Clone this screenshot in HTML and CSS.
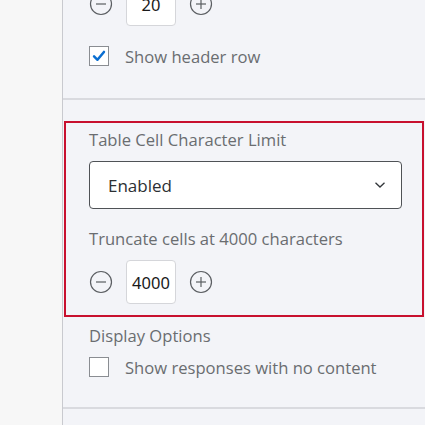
FILE: index.html
```html
<!DOCTYPE html>
<html>
<head>
<meta charset="utf-8">
<link rel="stylesheet" href="styles.css">
</head>
<body>
<div class="layout">
  <div class="side"></div>
  <div class="panel">
    <div class="section first">
      <div class="stepper top">
        <svg class="circ" viewBox="0 0 24 24"><circle cx="12" cy="12" r="10.5"/><line x1="7" y1="12" x2="17" y2="12"/></svg>
        <div class="num">20</div>
        <svg class="circ" viewBox="0 0 24 24"><circle cx="12" cy="12" r="10.5"/><line x1="7" y1="12" x2="17" y2="12"/><line x1="12" y1="7" x2="12" y2="17"/></svg>
      </div>
      <div class="check-row">
        <span class="box checked"><svg viewBox="0 0 20 20"><path d="M4.5 10.5 L8.3 14.2 L15.5 5.5"/></svg></span>
        <span class="check-label">Show header row</span>
      </div>
    </div>
    <div class="divider"></div>
    <div class="highlight">
      <div class="label first-label">Table Cell Character Limit</div>
      <div class="select">
        <span>Enabled</span>
        <svg class="chev" viewBox="0 0 12 8"><path d="M1.5 1.8 L6 6 L10.5 1.8"/></svg>
      </div>
      <div class="label trunc">Truncate cells at 4000 characters</div>
      <div class="stepper">
        <svg class="circ" viewBox="0 0 24 24"><circle cx="12" cy="12" r="10.5"/><line x1="7" y1="12" x2="17" y2="12"/></svg>
        <div class="num">4000</div>
        <svg class="circ" viewBox="0 0 24 24"><circle cx="12" cy="12" r="10.5"/><line x1="7" y1="12" x2="17" y2="12"/><line x1="12" y1="7" x2="12" y2="17"/></svg>
      </div>
    </div>
    <div class="section display">
      <div class="label">Display Options</div>
      <div class="check-row second">
        <span class="box"></span>
        <span class="check-label">Show responses with no content</span>
      </div>
    </div>
    <div class="divider bottom"></div>
  </div>
</div>
</body>
</html>
```
FILE: styles.css
```css
html, body {
  margin: 0;
  padding: 0;
  height: 100%;
  overflow: hidden;
}
body {
  font-family: "Open Sans", "Noto Sans", sans-serif;
  background: #f3f4f8;
}
.layout {
  display: flex;
  height: 425px;
}
.side {
  width: 62px;
  flex: none;
  background: #f7f7f7;
  border-right: 1px solid #c9cacf;
}
.panel {
  flex: 1;
  background: #f3f4f8;
  display: flex;
  flex-direction: column;
}
.section {
  padding-left: 26px;
}
.stepper {
  display: flex;
  align-items: center;
  height: 44px;
}
.stepper.top {
  margin-top: -18px;
}
.circ {
  width: 24px;
  height: 24px;
  flex: none;
  fill: none;
  stroke: #5b5e62;
  stroke-width: 1.2;
}
.num {
  width: 48px;
  height: 42px;
  margin: 0 13px;
  border: 1px solid #d5d6da;
  border-radius: 4px;
  background: #fff;
  display: flex;
  align-items: center;
  justify-content: center;
  font-size: 16.5px;
  color: #1a1a1a;
  font-family: "Noto Sans", "Open Sans", sans-serif;
}
.check-row {
  display: flex;
  align-items: center;
  margin-top: 20px;
  height: 20px;
}
.box {
  width: 18px;
  height: 18px;
  border: 1px solid #8a8d92;
  background: #fff;
  flex: none;
  display: flex;
  align-items: center;
  justify-content: center;
}
.box svg {
  width: 18px;
  height: 18px;
  fill: none;
  stroke: #0a6ed1;
  stroke-width: 2.8;
  stroke-linecap: round;
  stroke-linejoin: round;
}
.check-label {
  margin-left: 16px;
  font-size: 16.6px;
  color: #6a6d70;
}
.divider {
  border-top: 2px solid #d9dadf;
  margin-top: 32px;
}
.highlight {
  margin-top: 21px;
  margin-left: 1px;
  margin-right: 1px;
  border: 2px solid #c8102e;
  padding: 7px 20px 11px 23px;
}
.label {
  font-size: 16.6px;
  line-height: 20px;
  color: #6a6d70;
}
.select {
  margin-top: 11px;
  height: 46px;
  border: 1px solid #4f5256;
  border-radius: 4px;
  background: #fff;
  display: flex;
  align-items: center;
  justify-content: space-between;
  padding: 0 15px 0 18px;
  font-size: 17px;
  color: #2c2f33;
}
.chev {
  width: 12px;
  height: 8px;
  fill: none;
  stroke: #32363a;
  stroke-width: 1.3;
}
.trunc {
  margin-top: 20px;
}
.highlight .stepper {
  margin-top: 11px;
}
.display {
  margin-top: 9px;
}
.check-row.second {
  margin-top: 11px;
}
.divider.bottom {
  margin-top: 30px;
}
```
